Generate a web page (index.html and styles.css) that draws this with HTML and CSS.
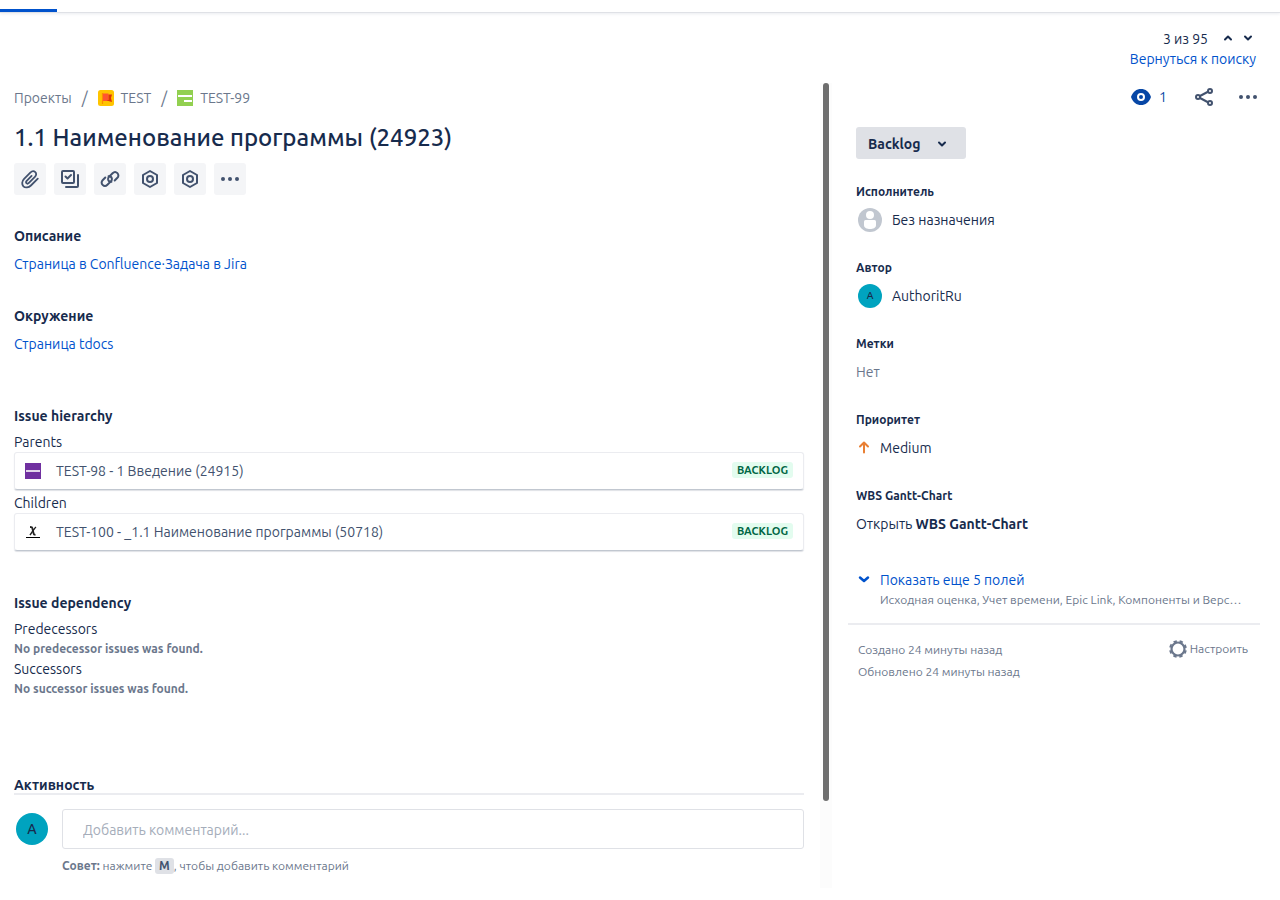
FILE: index.html
```html
<!DOCTYPE html>
<html lang="ru">
<head>
<meta charset="utf-8">
<meta name="viewport" content="width=device-width, initial-scale=1">
<title>TEST-99 – 1.1 Наименование программы (24923)</title>
<link rel="stylesheet" href="styles.css">
</head>
<body>
<header class="topbar"><div class="topbar-tab"></div></header>
<nav class="pager" aria-label="Результаты поиска">
  <div class="pager-row">
    <span class="pager-count">3 из 95</span>
    <button class="bare" aria-label="Предыдущая"><svg width="10" height="10" viewBox="0 0 10 10"><path d="M2 5.500 5 2.500 8 5.500" class="chev"/></svg></button>
    <button class="bare" aria-label="Следующая"><svg width="10" height="10" viewBox="0 0 10 10"><path d="M2 2.500 5 5.500 8 2.500" class="chev"/></svg></button>
  </div>
  <a href="#">Вернуться к поиску</a>
</nav>
<div class="layout">
  <main class="issue">
    <nav class="crumbs" aria-label="Навигация">
      <a href="#">Проекты</a>
      <span class="slash">/</span>
      <a href="#"><svg width="16" height="16" viewBox="0 0 16 16"><rect width="16" height="16" rx="2.5" fill="#ffc400"/><path d="M4.500 3v11" stroke="#ff8b00" stroke-width="1.2"/><path d="M5 3.500h5.500v7.500H5z" fill="#ff5630"/><path d="M8.500 10.500 14 12l-1-4 1-3.500h-3.500V10z" fill="#de350b"/></svg>TEST</a>
      <span class="slash">/</span>
      <a href="#"><svg width="16" height="16" viewBox="0 0 16 16"><rect width="16" height="16" fill="#92d050"/><path d="M1 6h14M7 11h8" stroke="#fff" stroke-width="2"/></svg>TEST-99</a>
    </nav>
    <h1>1.1 Наименование программы (24923)</h1>
    <div class="tools">
      <button class="tool" aria-label="Вложить"><svg class="ico" width="24" height="24" viewBox="0 0 24 24"><path d="M19.800 11.600 12.900 18.500c-2.300 2.300-5.700 2.600-7.500.8s-1.600-5.200.7-7.500l6.200-6.200c1.500-1.500 3.700-1.700 5-.5s1.100 3.300-.4 4.800l-6 6c-.8.8-1.900.9-2.500.3s-.5-1.600.3-2.400l4.900-4.900" stroke-width="1.800"/></svg></button>
      <button class="tool" aria-label="Подзадача"><svg class="ico" width="24" height="24" viewBox="0 0 24 24"><rect x="4" y="4" width="12" height="12" rx="1"/><path d="m7.500 9.500 2 2L13 8"/><path d="M20 8v11a1 1 0 0 1-1 1H8"/></svg></button>
      <button class="tool" aria-label="Связать"><svg class="ico" width="24" height="24" viewBox="0 0 24 24"><path d="M13.400 14.800c-1.600.2-3-.9-3.300-2.400-.1-1 .2-1.900.8-2.500l3.700-3.700c1.400-1.400 3.500-1.400 4.800-.1s1.300 3.400 0 4.700l-2.700 2.700"/><path d="M10.600 9.200c1.600-.2 3 .9 3.300 2.400.1 1-.2 1.900-.8 2.500l-3.700 3.700c-1.400 1.400-3.500 1.400-4.800.1s-1.300-3.400 0-4.700l2.700-2.700"/></svg></button>
      <button class="tool" aria-label="Приложение"><svg class="ico" width="24" height="24" viewBox="0 0 24 24"><path d="m12 4 7 4v8l-7 4-7-4V8z"/><circle cx="12" cy="12" r="3"/></svg></button>
      <button class="tool" aria-label="Приложение 2"><svg class="ico" width="24" height="24" viewBox="0 0 24 24"><path d="m12 4 7 4v8l-7 4-7-4V8z"/><circle cx="12" cy="12" r="3"/></svg></button>
      <button class="tool" aria-label="Ещё"><svg class="dots" width="24" height="24" viewBox="0 0 24 24"><circle cx="5" cy="12" r="2"/><circle cx="12" cy="12" r="2"/><circle cx="19" cy="12" r="2"/></svg></button>
    </div>
    <section class="block">
      <h2>Описание</h2>
      <p><a href="#">Страница в Confluence</a>·<a href="#">Задача в Jira</a></p>
    </section>
    <section class="block">
      <h2>Окружение</h2>
      <p><a href="#">Страница tdocs</a></p>
    </section>
    <section class="links">
      <h2>Issue hierarchy</h2>
      <h3>Parents</h3>
      <a class="card" href="#"><svg width="16" height="16" viewBox="0 0 16 16"><rect width="16" height="16" fill="#7030a0"/><path d="M1 8h14" stroke="#e3d6ec" stroke-width="2"/></svg><span class="card-text">TEST-98 - 1 Введение (24915)</span><span class="badge">BACKLOG</span></a>
      <h3>Children</h3>
      <a class="card" href="#"><svg width="16" height="16" viewBox="0 0 16 16"><path d="M1 13.500h14" stroke="#000"/><path d="M5 3c2 0 2 0 2.500 2l1 4c.3 1.500.8 2 2 1.500" stroke="#222" stroke-width="1.800" fill="none"/><path d="M11 3C9.500 4 6.500 9 5 11" stroke="#222" stroke-width="1.500" fill="none"/></svg><span class="card-text">TEST-100 - _1.1 Наименование программы (50718)</span><span class="badge">BACKLOG</span></a>
    </section>
    <section class="links deps">
      <h2>Issue dependency</h2>
      <h3>Predecessors</h3>
      <p>No predecessor issues was found.</p>
      <h3>Successors</h3>
      <p>No successor issues was found.</p>
    </section>
    <section class="activity">
      <h2>Активность</h2>
      <div class="comment">
        <span class="avatar avatar-big">A</span>
        <div class="comment-body">
          <input type="text" aria-label="Комментарий" placeholder="Добавить комментарий...">
          <p class="hint"><b>Совет:</b> нажмите <kbd>M</kbd>, чтобы добавить комментарий</p>
        </div>
      </div>
    </section>
  </main>
  <div class="track"><div class="thumb"></div></div>
  <aside class="side">
    <div class="actions">
      <button class="bare watch" aria-label="Наблюдатели: 1"><svg width="24" height="24" viewBox="0 0 24 24"><path d="M12 4C7.500 4 4 6.500 2 12c2 5.500 5.500 8 10 8s8-2.500 10-8c-2-5.500-5.500-8-10-8z" fill="#0747a6"/><circle cx="12" cy="12" r="3" fill="#0747a6" stroke="#fff" stroke-width="2"/></svg><span>1</span></button>
      <button class="bare" aria-label="Поделиться"><svg class="ico" width="24" height="24" viewBox="0 0 24 24"><path d="m8 11 7.500-4M8 13l7.500 4"/><circle cx="6" cy="12" r="2"/><circle cx="18" cy="6" r="2"/><circle cx="18" cy="18" r="2"/></svg></button>
      <button class="bare" aria-label="Действия"><svg class="dots" width="24" height="24" viewBox="0 0 24 24"><circle cx="5" cy="12" r="2"/><circle cx="12" cy="12" r="2"/><circle cx="19" cy="12" r="2"/></svg></button>
    </div>
    <button class="status">Backlog<svg width="10" height="10" viewBox="0 0 10 10"><path d="M2 3.500 5 6.500 8 3.500" class="chev"/></svg></button>
    <dl class="fields">
      <div><dt>Исполнитель</dt><dd class="person"><svg width="24" height="24" viewBox="0 0 24 24"><circle cx="12" cy="12" r="12" fill="#c1c7d0"/><circle cx="12" cy="7" r="4" fill="#fff"/><path d="M6 13.500a1.500 1.500 0 0 1 1.500-1.500h9a1.500 1.500 0 0 1 1.500 1.500V17c0 3-3 4-6 4s-6-1-6-4z" fill="#fff"/></svg>Без назначения</dd></div>
      <div><dt>Автор</dt><dd class="person"><span class="avatar">A</span>AuthoritRu</dd></div>
      <div><dt>Метки</dt><dd class="muted">Нет</dd></div>
      <div><dt>Приоритет</dt><dd class="priority"><svg width="16" height="16" viewBox="0 0 16 16"><path d="M8 12.500V2.500M4 6.500l4-4 4 4" fill="none" stroke="#e97f33" stroke-width="2" stroke-linecap="round" stroke-linejoin="round"/></svg>Medium</dd></div>
      <div><dt>WBS Gantt-Chart</dt><dd>Открыть <b>WBS Gantt-Chart</b></dd></div>
    </dl>
    <button class="more"><svg width="16" height="16" viewBox="0 0 16 16"><path d="m4 6.500 4 3.500 4-3.500" fill="none" stroke="#0052cc" stroke-width="2.500" stroke-linecap="round" stroke-linejoin="round"/></svg><span class="more-body"><span class="more-title">Показать еще 5 полей</span><span class="more-list">Исходная оценка, Учет времени, Epic Link, Компоненты и Верс…</span></span></button>
    <footer class="meta">
      <div><p>Создано 24 минуты назад</p><p>Обновлено 24 минуты назад</p></div>
      <button class="bare configure"><svg width="18" height="18" viewBox="0 0 18 18"><g fill="none" stroke="#6b778c"><circle cx="9" cy="9" r="6.500" stroke-width="2.200"/><circle cx="9" cy="9" r="8" stroke-width="1.800" stroke-dasharray="3.400 2.883" stroke-dashoffset="-1.400"/></g></svg>Настроить</button>
    </footer>
  </aside>
</div>
</body>
</html>
```
FILE: styles.css
```css
* { box-sizing: border-box; }
body {
  margin: 0;
  background: #fff;
  color: #172b4d;
  font: 14px/20px Ubuntu, "Noto Sans", sans-serif;
}
h1, h2, h3, p, dl, dd { margin: 0; }
a { color: #0052cc; text-decoration: none; }
button { border: 0; padding: 0; font: inherit; color: inherit; cursor: pointer; }
svg { display: block; flex: none; }
.bare { background: none; display: flex; align-items: center; }
.chev { fill: none; stroke: #172b4d; stroke-width: 2; stroke-linecap: round; stroke-linejoin: round; }
.ico { fill: none; stroke: #42526e; stroke-width: 2; stroke-linecap: round; stroke-linejoin: round; }
.dots { fill: #42526e; }

.topbar { height: 13px; padding-top: 9px; border-bottom: 1px solid #dfe1e6; box-shadow: 0 1px 3px #ebecf0; }
.topbar-tab { width: 57px; height: 3px; background: #0052cc; }

.pager { display: flex; flex-direction: column; align-items: flex-end; padding: 16px 24px 0; }
.pager-row { display: flex; align-items: center; gap: 10px; padding-right: 3px; }
.pager-count { margin-right: 5px; }

.layout { display: grid; grid-template-columns: minmax(0, 1fr) 12px 448px; padding-top: 14px; }
.issue { padding: 5px 16px 0 14px; }
.track { background: #fcfcfc; padding: 0 3px; height: 805px; }
.thumb { height: 718px; border-radius: 3px; background: #6e6e6e; }

.crumbs { display: flex; align-items: center; gap: 10px; }
.crumbs a { display: flex; gap: 7px; align-items: center; color: #6b778c; }
.slash { color: #6b778c; font-size: 16px; }
h1 { margin-top: 16px; font-size: 24px; line-height: 28px; font-weight: 500; }
.tools { display: flex; gap: 8px; margin-top: 11px; }
.tool { width: 32px; height: 32px; border-radius: 3px; background: #f4f5f7; display: grid; place-items: center; }
h2 { font-size: 14px; line-height: 20px; font-weight: 700; }
.block { margin-top: 32px; }
.tools + .block { margin-top: 31px; }
.block p { margin-top: 8px; color: #0052cc; }
.links { margin-top: 52px; }
.links h2 { margin-bottom: 6px; }
h3 { font-size: 14px; line-height: 20px; font-weight: 400; }
.card {
  display: flex; align-items: center; height: 38px; margin-bottom: 3px; padding: 0 10px;
  border: 1px solid #ebecf0; border-bottom-color: #c1c7d0; border-radius: 3px; box-shadow: 0 1px 1px #dfe1e6; color: #42526e;
}
.card-text { flex: 1; margin-left: 15px; }
.badge { margin-bottom: 2px; padding: 0 5px; border-radius: 3px; background: #e3fcef; color: #006644; font-size: 11px; line-height: 16px; font-weight: 700; }
.deps { margin-top: 42px; }
.deps p { font-size: 12px; font-weight: 700; color: #6b778c; }
.activity { margin-top: 76px; }
.activity h2 { padding-top: 2px; line-height: 16px; border-bottom: 2px solid #ebecf0; }
.comment { display: flex; gap: 14px; margin-top: 14px; }
.avatar { display: grid; place-items: center; width: 24px; height: 24px; border-radius: 50%; background: #00a3bf; font-size: 10px; font-weight: 500; }
.avatar-big { width: 32px; height: 32px; margin: 4px 0 0 2px; font-size: 14px; }
.comment-body { flex: 1; min-width: 0; }
input { display: block; width: 100%; height: 40px; padding: 2px 20px 0; border: 1px solid #dfe1e6; border-radius: 3px; font: inherit; color: inherit; }
input::placeholder { color: #a5adba; opacity: 1; }
.hint { margin-top: 7px; font-size: 12px; color: #6b778c; }
kbd { display: inline-block; padding: 0 4px; border-radius: 3px; background: #dfe1e6; color: #42526e; font: inherit; font-weight: 700; line-height: 16px; }

.side { padding: 0 20px 0 24px; }
.actions { display: flex; justify-content: flex-end; gap: 20px; align-items: center; height: 28px; }
.watch { gap: 6px; margin-right: 5px; color: #0747a6; }
.status { display: flex; align-items: center; gap: 16px; height: 32px; margin-top: 16px; padding: 2px 19px 0 12px; border-radius: 3px; background: #dfe1e6; font-weight: 700; }
.fields { margin-top: 25px; display: grid; gap: 28px; }
dt { font-size: 12px; line-height: 16px; font-weight: 700; }
dd { margin-top: 8px; line-height: 24px; }
.person { display: flex; gap: 10px; padding-left: 2px; }
.muted { color: #6b778c; }
.priority { display: flex; align-items: center; gap: 8px; }
.more { display: flex; gap: 8px; width: 100%; margin-top: 34px; padding-right: 8px; background: none; text-align: left; }
.more svg { margin-top: 1px; }
.more-body { min-width: 0; }
.more-title { display: block; color: #0052cc; }
.more-list { display: block; font-size: 12px; color: #6b778c; white-space: nowrap; overflow: hidden; text-overflow: ellipsis; }
.meta { display: flex; justify-content: space-between; align-items: flex-start; margin: 13px 0 0 -8px; padding: 14px 12px 0 10px; border-top: 2px solid #ebecf0; font-size: 12px; line-height: 22px; color: #6b778c; }
.configure { gap: 3px; line-height: 20px; }
```
